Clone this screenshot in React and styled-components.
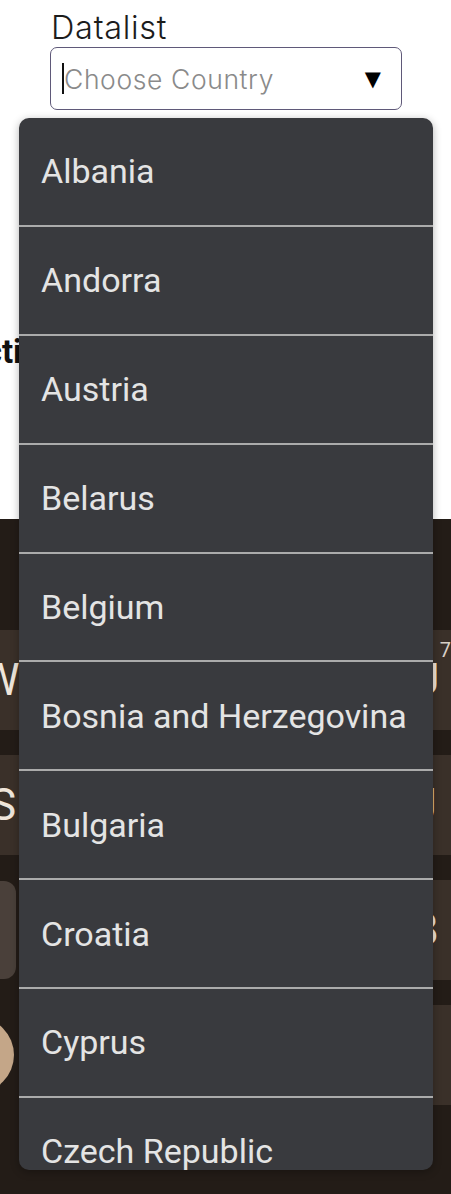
import React from 'react'
import styled, { createGlobalStyle } from 'styled-components'

const countries = [
  'Albania',
  'Andorra',
  'Austria',
  'Belarus',
  'Belgium',
  'Bosnia and Herzegovina',
  'Bulgaria',
  'Croatia',
  'Cyprus',
  'Czech Republic',
]

const keyRows = [
  { offset: -50, keys: [{ label: 'W' }, { label: 'U', hint: '7' }] },
  { offset: -47, keys: [{ label: 'S' }, { label: 'J' }] },
  { offset: -84, keys: [{ tone: 'shift', w: 100 }, { label: 'B' }] },
  { offset: -62, keys: [{ tone: 'round' }, { tone: 'plain', w: 130 }] },
]

const App = () => {
  return (
    <>
      <GlobalStyle />
      <Screen>
        <Page>
          <Field>
            <Label>Datalist</Label>
            <InputBox>
              <Caret />
              <Placeholder>Choose Country</Placeholder>
              <Arrow>▼</Arrow>
            </InputBox>
          </Field>
          <Heading>Selection</Heading>
        </Page>

        <Keyboard>
          {keyRows.map((row, i) => (
            <KeyRow key={i} $offset={row.offset}>
              {row.keys.map((k, j) => (
                <Key key={j} $tone={k.tone} $w={k.w}>
                  {k.label}
                  {k.hint && <Hint>{k.hint}</Hint>}
                </Key>
              ))}
            </KeyRow>
          ))}
        </Keyboard>

        <Dropdown>
          {countries.map((c) => (
            <Option key={c}>{c}</Option>
          ))}
        </Dropdown>
      </Screen>
    </>
  )
}

export default App

const GlobalStyle = createGlobalStyle`
  html, body {
    margin: 0;
    padding: 0;
    background: #ffffff;
  }
  * { box-sizing: border-box; }
`

const Screen = styled.div`
  position: relative;
  width: 451px;
  height: 1194px;
  overflow: hidden;
  display: flex;
  flex-direction: column;
`

const Page = styled.div`
  height: 519px;
  background: #ffffff;
  padding: 8px 0 0 0;
`

const Field = styled.div`
  display: flex;
  flex-direction: column;
  margin-left: 50px;
  width: 352px;
`

const Label = styled.div`
  font-family: Inter, 'Open Sans', sans-serif;
  font-weight: 300;
  font-size: 32.5px;
  line-height: 39px;
  color: #1c1c1c;
  padding-left: 1px;
  letter-spacing: 0.7px;
`

const InputBox = styled.div`
  height: 63px;
  border: 1.5px solid #5f5979;
  border-radius: 7px;
  display: flex;
  align-items: center;
  padding: 0 20px 0 11px;
`

const Caret = styled.span`
  width: 2px;
  height: 31px;
  background: #111;
`

const Placeholder = styled.span`
  flex: 1;
  font-family: Inter, 'Open Sans', sans-serif;
  font-weight: 300;
  font-size: 26.5px;
  color: #8a8a8a;
  letter-spacing: 0.6px;
`

const Arrow = styled.span`
  font-family: 'DejaVu Sans', sans-serif;
  font-size: 21px;
  color: #000;
`

const Heading = styled.h2`
  margin: 222px 0 0 -80px;
  font-family: Roboto, 'Liberation Sans', sans-serif;
  font-weight: 700;
  font-size: 33px;
  color: #111;
`

const Keyboard = styled.div`
  flex: 1;
  background: #231c17;
  padding-top: 111px;
  display: flex;
  flex-direction: column;
  gap: 25px;
`

const KeyRow = styled.div`
  height: 100px;
  display: flex;
  justify-content: space-between;
  align-items: center;
  margin-left: ${(p) => p.$offset}px;
  margin-right: -24px;
`

const Key = styled.div`
  position: relative;
  width: ${(p) => (p.$tone === 'round' ? 76 : p.$w || 100)}px;
  height: ${(p) => (p.$tone === 'round' ? 76 : p.$tone === 'shift' ? 98 : 100)}px;
  border-radius: ${(p) => (p.$tone === 'round' ? '50%' : '12px')};
  background: ${(p) =>
    p.$tone === 'shift' ? '#4a403a' : p.$tone === 'round' ? '#c4a688' : '#3a3029'};
  display: flex;
  align-items: center;
  justify-content: center;
  font-family: Roboto, 'Liberation Sans', sans-serif;
  font-size: 44px;
  color: #efe5da;
`

const Hint = styled.span`
  position: absolute;
  top: 8px;
  right: 24px;
  font-size: 20px;
  color: #d8cfc6;
`

const Dropdown = styled.div`
  position: absolute;
  top: 118px;
  left: 19px;
  width: 414px;
  height: 1052px;
  overflow: hidden;
  background: #393a3e;
  border-radius: 10px;
  box-shadow: 0 2px 8px rgba(0, 0, 0, 0.3);
`

const Option = styled.div`
  height: 108.875px;
  display: flex;
  align-items: center;
  padding-left: 22px;
  border-bottom: 2px solid #ababab;
  font-family: Roboto, 'Liberation Sans', sans-serif;
  font-size: 34px;
  color: #e4e4e4;
`
